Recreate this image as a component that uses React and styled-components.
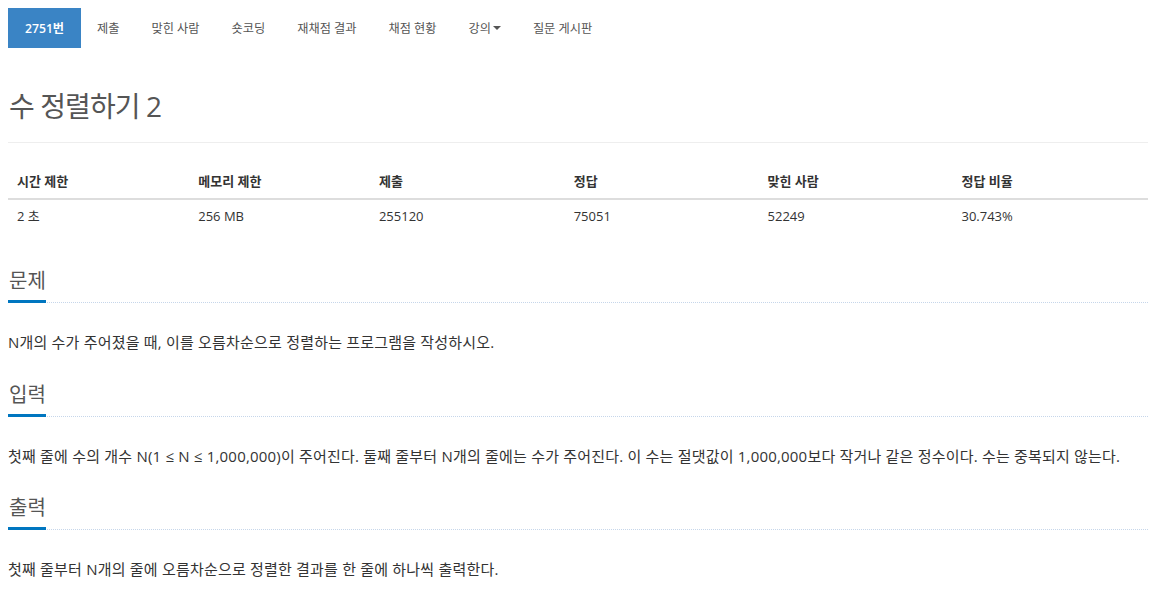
import React from 'react'
import { styled, createGlobalStyle } from 'styled-components'

const GlobalStyle = createGlobalStyle`
  html, body {
    margin: 0;
    padding: 0;
    background: #fff;
  }
  body {
    font-family: "Open Sans", "Noto Sans CJK KR", sans-serif;
    font-size: 14px;
    color: #333;
  }
`

const Page = styled.div`
  padding: 8px 8px 0;
`

const Nav = styled.ul`
  display: flex;
  list-style: none;
  margin: 0;
  padding: 0;
  height: 40px;
`

const NavItem = styled.li`
  display: flex;
  align-items: center;
  padding: 0 ${p => (p.$active ? '17px' : '16px')};
  font-size: 12.2px;
  color: ${p => (p.$active ? '#fff' : '#555')};
  background: ${p => (p.$active ? '#3a84c5' : 'transparent')};
  font-weight: ${p => (p.$active ? 600 : 400)};
`

const Caret = styled.span`
  display: inline-block;
  width: 0;
  height: 0;
  margin-left: 2px;
  border-top: 4px solid #555;
  border-left: 4px solid transparent;
  border-right: 4px solid transparent;
  vertical-align: middle;
`

const Title = styled.h1`
  margin: 40px 0 0;
  padding-bottom: 18px;
  font-size: 28px;
  letter-spacing: -0.9px;
  font-weight: 400;
  line-height: 36px;
  color: #555;
  border-bottom: 1px solid #eee;
  padding-left: 1px;
`

const Table = styled.table`
  width: 100%;
  border-collapse: collapse;
  margin-top: 21px;
  font-size: 13px;
`

const Th = styled.th`
  text-align: left;
  font-weight: 700;
  padding: 8px 9px;
  line-height: 18px;
  border-bottom: 2px solid #ddd;
  width: ${p => p.$w}px;
  color: #333;
`

const Td = styled.td`
  padding: 7px 9px;
  line-height: 18px;
`

const Section = styled.section`
  margin-top: ${p => p.$top}px;
`

const Headline = styled.div`
  border-bottom: 1px dotted #c6d6ea;
`

const HeadText = styled.h2`
  display: inline-block;
  margin: 0 0 -1px;
  font-size: 20px;
  font-weight: 400;
  line-height: 24px;
  color: #555;
  padding: 0 0 7px 1px;
  border-bottom: 3px solid #0076c0;
`

const Desc = styled.p`
  margin: 29px 0 0;
  font-size: 15px;
  letter-spacing: 0.2px;
  line-height: 20px;
  color: #333;
`

const tabs = ['제출', '맞힌 사람', '숏코딩', '재채점 결과', '채점 현황']

const cols = [
  ['시간 제한', '2 초', 183],
  ['메모리 제한', '256 MB', 181],
  ['제출', '255120', 194],
  ['정답', '75051', 194],
  ['맞힌 사람', '52249', 194],
  ['정답 비율', '30.743%', 194],
]

const sections = [
  ['문제', 'N개의 수가 주어졌을 때, 이를 오름차순으로 정렬하는 프로그램을 작성하시오.', 37],
  ['입력', '첫째 줄에 수의 개수 N(1 ≤ N ≤ 1,000,000)이 주어진다. 둘째 줄부터 N개의 줄에는 수가 주어진다. 이 수는 절댓값이 1,000,000보다 작거나 같은 정수이다. 수는 중복되지 않는다.', 31],
  ['출력', '첫째 줄부터 N개의 줄에 오름차순으로 정렬한 결과를 한 줄에 하나씩 출력한다.', 30],
]

export default function App() {
  return (
    <>
      <GlobalStyle />
      <Page>
        <Nav>
          <NavItem $active>2751번</NavItem>
          {tabs.map(t => <NavItem key={t}>{t}</NavItem>)}
          <NavItem>강의<Caret /></NavItem>
          <NavItem>질문 게시판</NavItem>
        </Nav>
        <Title>수 정렬하기 2</Title>
        <Table>
          <thead>
            <tr>{cols.map(c => <Th key={c[0]} $w={c[2]}>{c[0]}</Th>)}</tr>
          </thead>
          <tbody>
            <tr>{cols.map(c => <Td key={c[0]}>{c[1]}</Td>)}</tr>
          </tbody>
        </Table>
        {sections.map(([h, text, top]) => (
          <Section key={h} $top={top}>
            <Headline><HeadText>{h}</HeadText></Headline>
            <Desc>{text}</Desc>
          </Section>
        ))}
      </Page>
    </>
  )
}
